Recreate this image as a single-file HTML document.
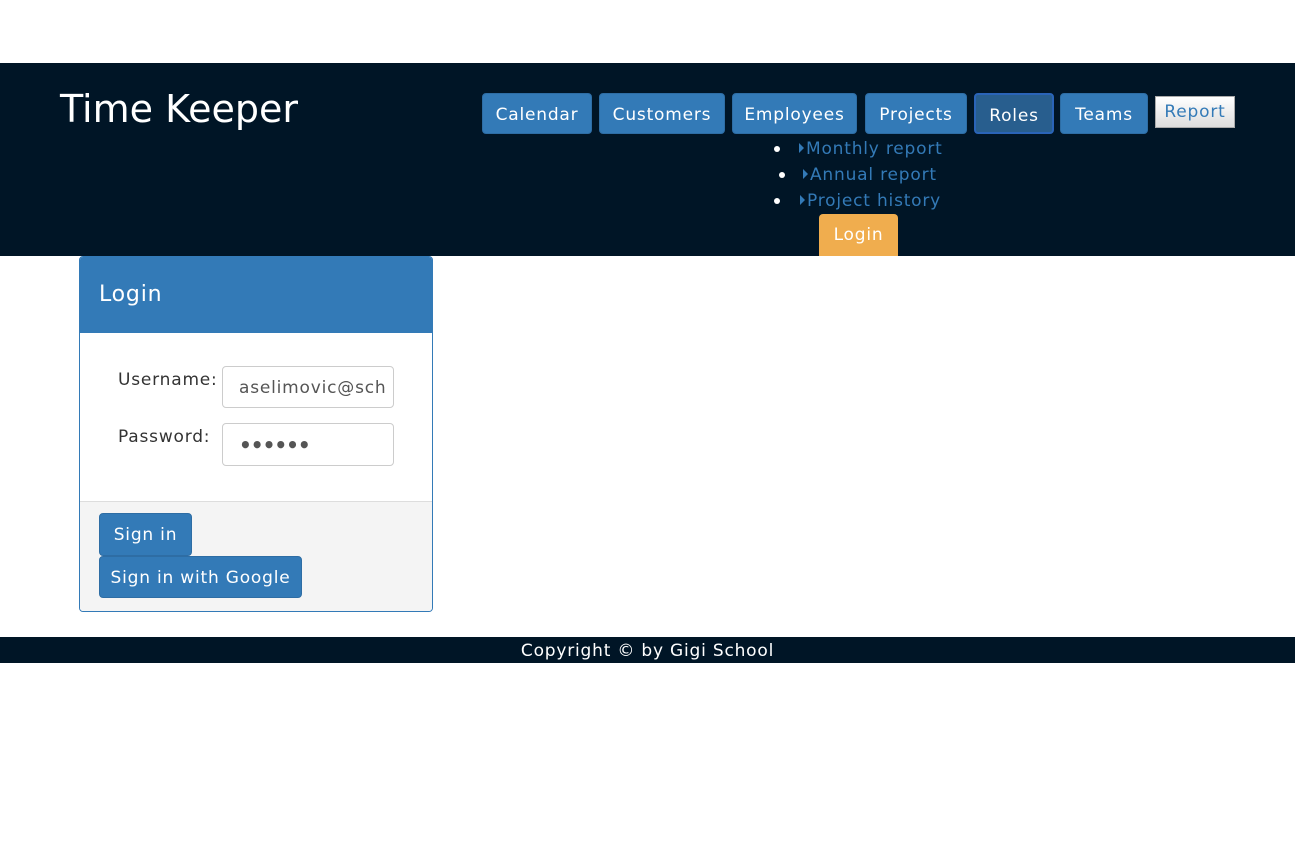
<!DOCTYPE html>
<html><head><style>
body{margin:0;width:1295px;height:844px;background:#fff;font-family:"DejaVu Sans","Liberation Sans",sans-serif;position:relative;overflow:hidden;letter-spacing:0.8px}
.a{position:absolute;box-sizing:border-box}
.hdr{left:0;top:63px;width:1295px;height:193px;background:#001526}
.t{left:60px;top:85px;color:#fff;font-size:38px;line-height:48px;letter-spacing:0}
.b{background:#337ab7;color:#fff;font-size:17px;border-radius:4px;top:93px;height:41px;line-height:42px;text-align:center;border:1px solid #2e6da4;white-space:nowrap}
.li{color:#337ab7;font-size:17px;line-height:26px}
.dot{position:absolute;width:6px;height:6px;border-radius:3px;background:#fff}
.tri{display:inline-block;width:0;height:0;border-left:5px solid #337ab7;border-top:5px solid transparent;border-bottom:5px solid transparent;margin-right:2px;vertical-align:1px}
.inp{border:1px solid #ccc;border-radius:4px;background:#fff;color:#555;font-size:17px;padding-left:16px;white-space:nowrap;overflow:hidden}
</style></head><body>
<div class="a hdr"></div>
<div class="a t">Time Keeper</div>
<div class="a b" style="left:482px;width:110px">Calendar</div>
<div class="a b" style="left:599px;width:126px">Customers</div>
<div class="a b" style="left:732px;width:125px">Employees</div>
<div class="a b" style="left:865px;width:102px">Projects</div>
<div class="a b" style="left:974px;width:80px;background:#285e8e;border:2px solid #2a64b8">Roles</div>
<div class="a b" style="left:1060px;width:88px">Teams</div>
<div class="a" style="left:1155px;top:96px;width:80px;height:32px;border:1px solid #aaa;background:linear-gradient(#fff,#ddd);color:#337ab7;font-size:17px;line-height:30px;text-align:center">Report</div>
<div class="dot" style="left:774px;top:146px"></div>
<div class="a li" style="left:799px;top:136px"><span class="tri"></span>Monthly report</div>
<div class="dot" style="left:779px;top:172px"></div>
<div class="a li" style="left:803px;top:162px"><span class="tri"></span>Annual report</div>
<div class="dot" style="left:774px;top:198px"></div>
<div class="a li" style="left:800px;top:188px"><span class="tri"></span>Project history</div>
<div class="a" style="left:819px;top:214px;width:79px;height:42px;background:#f0ad4e;border-radius:4px 4px 0 0;color:#fff;font-size:17px;line-height:42px;text-align:center">Login</div>

<div class="a" style="left:79px;top:256px;width:354px;height:356px;border:1px solid #337ab7;border-radius:4px;overflow:hidden;background:#fff">
 <div class="a" style="left:0;top:0;width:352px;height:76px;background:#337ab7;color:#fff;font-size:22px;padding:25px 0 0 19px">Login</div>
 <div class="a" style="left:0;top:244px;width:352px;height:112px;background:#f4f4f4;border-top:1px solid #ddd"></div>
</div>
<div class="a" style="left:118px;top:370px;font-size:17px;color:#333">Username:</div>
<div class="a" style="left:118px;top:427px;font-size:17px;color:#333">Password:</div>
<div class="a inp" style="left:222px;top:366px;width:172px;height:42px;line-height:43px">aselimovic@sch</div>
<div class="a inp" style="left:222px;top:423px;width:172px;height:43px;line-height:43px;font-size:20px;font-weight:bold;letter-spacing:-1px">••••••</div>
<div class="a b" style="left:99px;top:513px;width:93px;height:43px;line-height:43px">Sign in</div>
<div class="a b" style="left:99px;top:556px;width:203px;height:42px;line-height:43px">Sign in with Google</div>

<div class="a" style="left:0;top:637px;width:1295px;height:26px;background:#001526;color:#fff;font-size:17px;line-height:28px;text-align:center">Copyright © by Gigi School</div>
</body></html>
